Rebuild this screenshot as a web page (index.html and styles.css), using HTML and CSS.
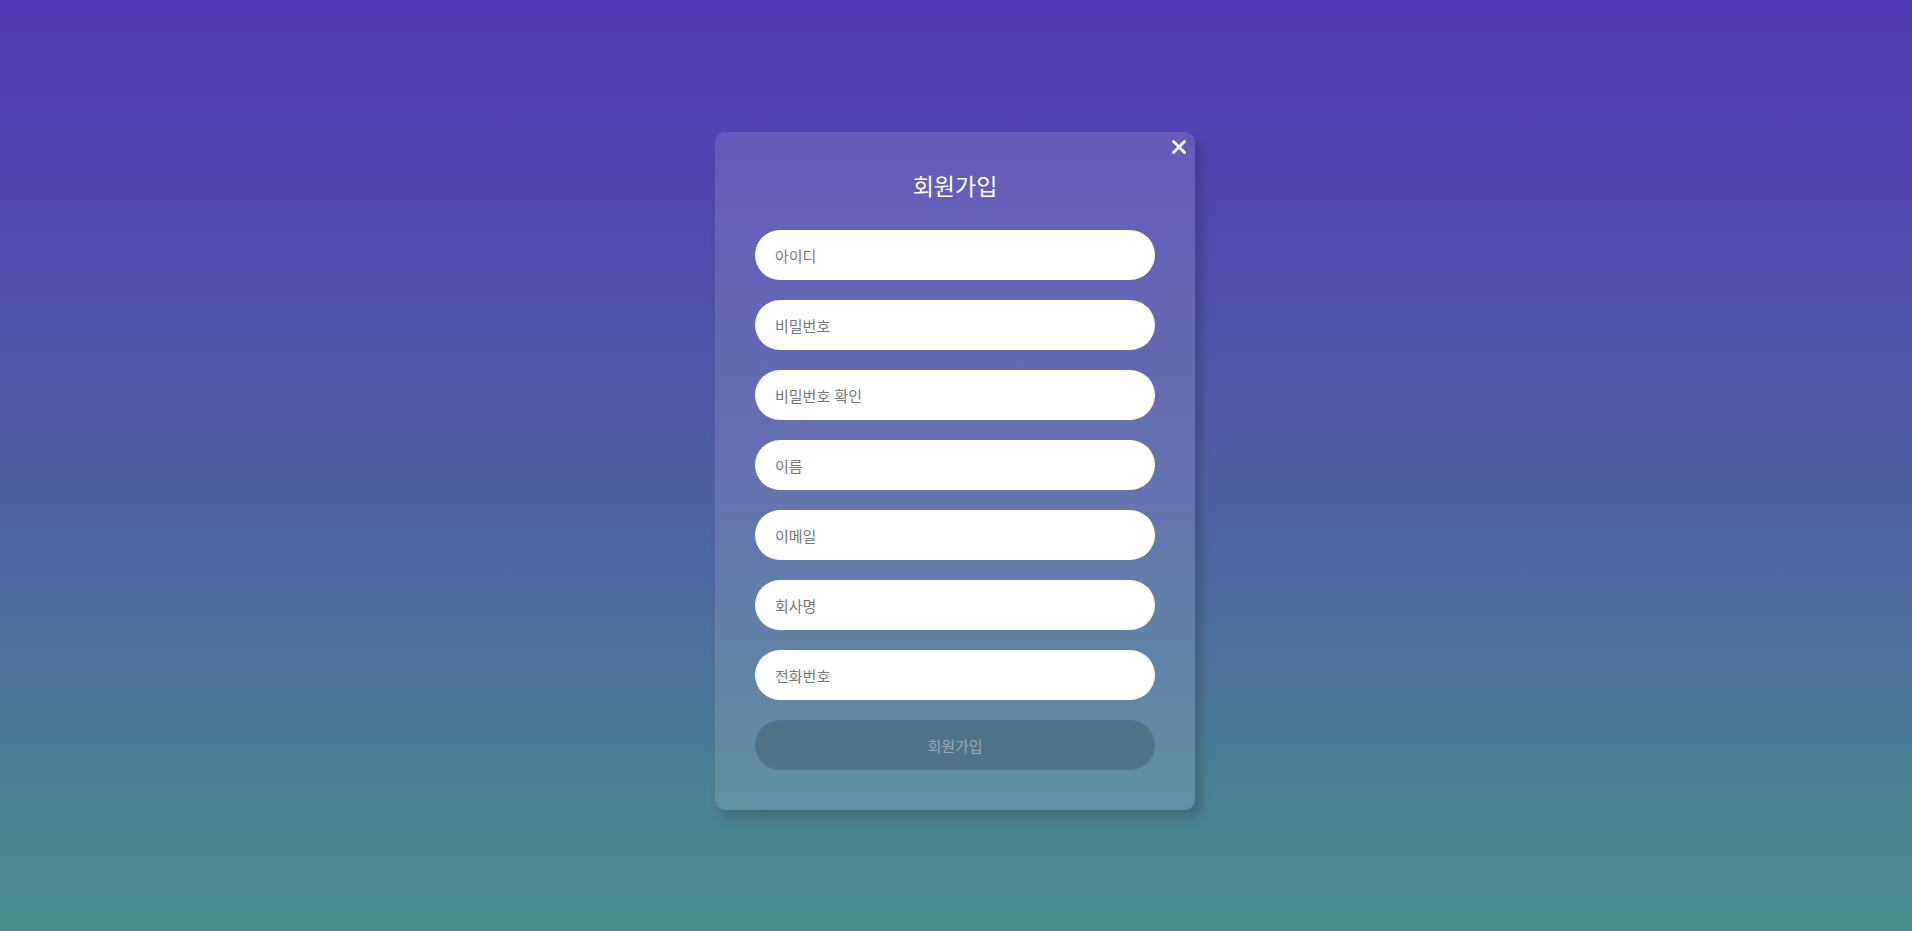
FILE: index.html
```html
<!DOCTYPE html>
<html lang="ko">
<head>
<meta charset="utf-8">
<title>회원가입</title>
<link rel="stylesheet" href="styles.css">
</head>
<body>
<div class="page">
  <div class="card">
    <button class="close" type="button" aria-label="닫기">
      <svg width="16" height="16" viewBox="0 0 16 16"><path d="M2.5 2.5 L13.5 13.5 M13.5 2.5 L2.5 13.5" stroke="#fff" stroke-width="2.8" stroke-linecap="round"/></svg>
    </button>
    <h1 class="title">회원가입</h1>
    <form class="form">
      <input class="field" type="text" placeholder="아이디">
      <input class="field" type="password" placeholder="비밀번호">
      <input class="field" type="password" placeholder="비밀번호 확인">
      <input class="field" type="text" placeholder="이름">
      <input class="field" type="email" placeholder="이메일">
      <input class="field" type="text" placeholder="회사명">
      <input class="field" type="tel" placeholder="전화번호">
      <button class="submit" type="button">회원가입</button>
    </form>
  </div>
</div>
</body>
</html>
```
FILE: styles.css
```css
* { box-sizing: border-box; }
html, body { margin: 0; height: 100%; }
body {
  font-family: "Noto Sans CJK KR", "Noto Sans", sans-serif;
  background: linear-gradient(180deg, #5339b6 0%, #4f5aa6 45%, #4a8f8e 100%);
  overflow: hidden;
}
.page {
  height: 931px;
  display: flex;
  justify-content: center;
  align-items: flex-start;
  padding: 132px 2px 0 0;
}
.card {
  position: relative;
  width: 480px;
  padding: 0 40px 40px;
  border-radius: 10px;
  background: rgba(255, 255, 255, 0.12);
  box-shadow: 6px 8px 12px rgba(0, 0, 0, 0.18);
}
.close {
  position: absolute;
  top: 7px;
  right: 8px;
  width: 16px;
  height: 16px;
  padding: 0;
  border: 0;
  background: none;
  display: flex;
}
.title {
  margin: 0;
  padding-top: 36px;
  height: 98px;
  text-align: center;
  color: #fff;
  font-size: 23px;
  font-weight: 400;
  line-height: 34px;
}
.form {
  display: flex;
  flex-direction: column;
  gap: 20px;
}
.field {
  height: 50px;
  border: 0;
  border-radius: 25px;
  background: #fff;
  padding: 0 20px;
  font-family: inherit;
  font-size: 15px;
  color: #333;
  outline: none;
}
.field::placeholder { color: #777; }
.submit {
  height: 50px;
  border: 0;
  border-radius: 25px;
  background: rgba(40, 60, 80, 0.3);
  color: #9aa9b2;
  font-family: inherit;
  font-size: 15px;
}
```
